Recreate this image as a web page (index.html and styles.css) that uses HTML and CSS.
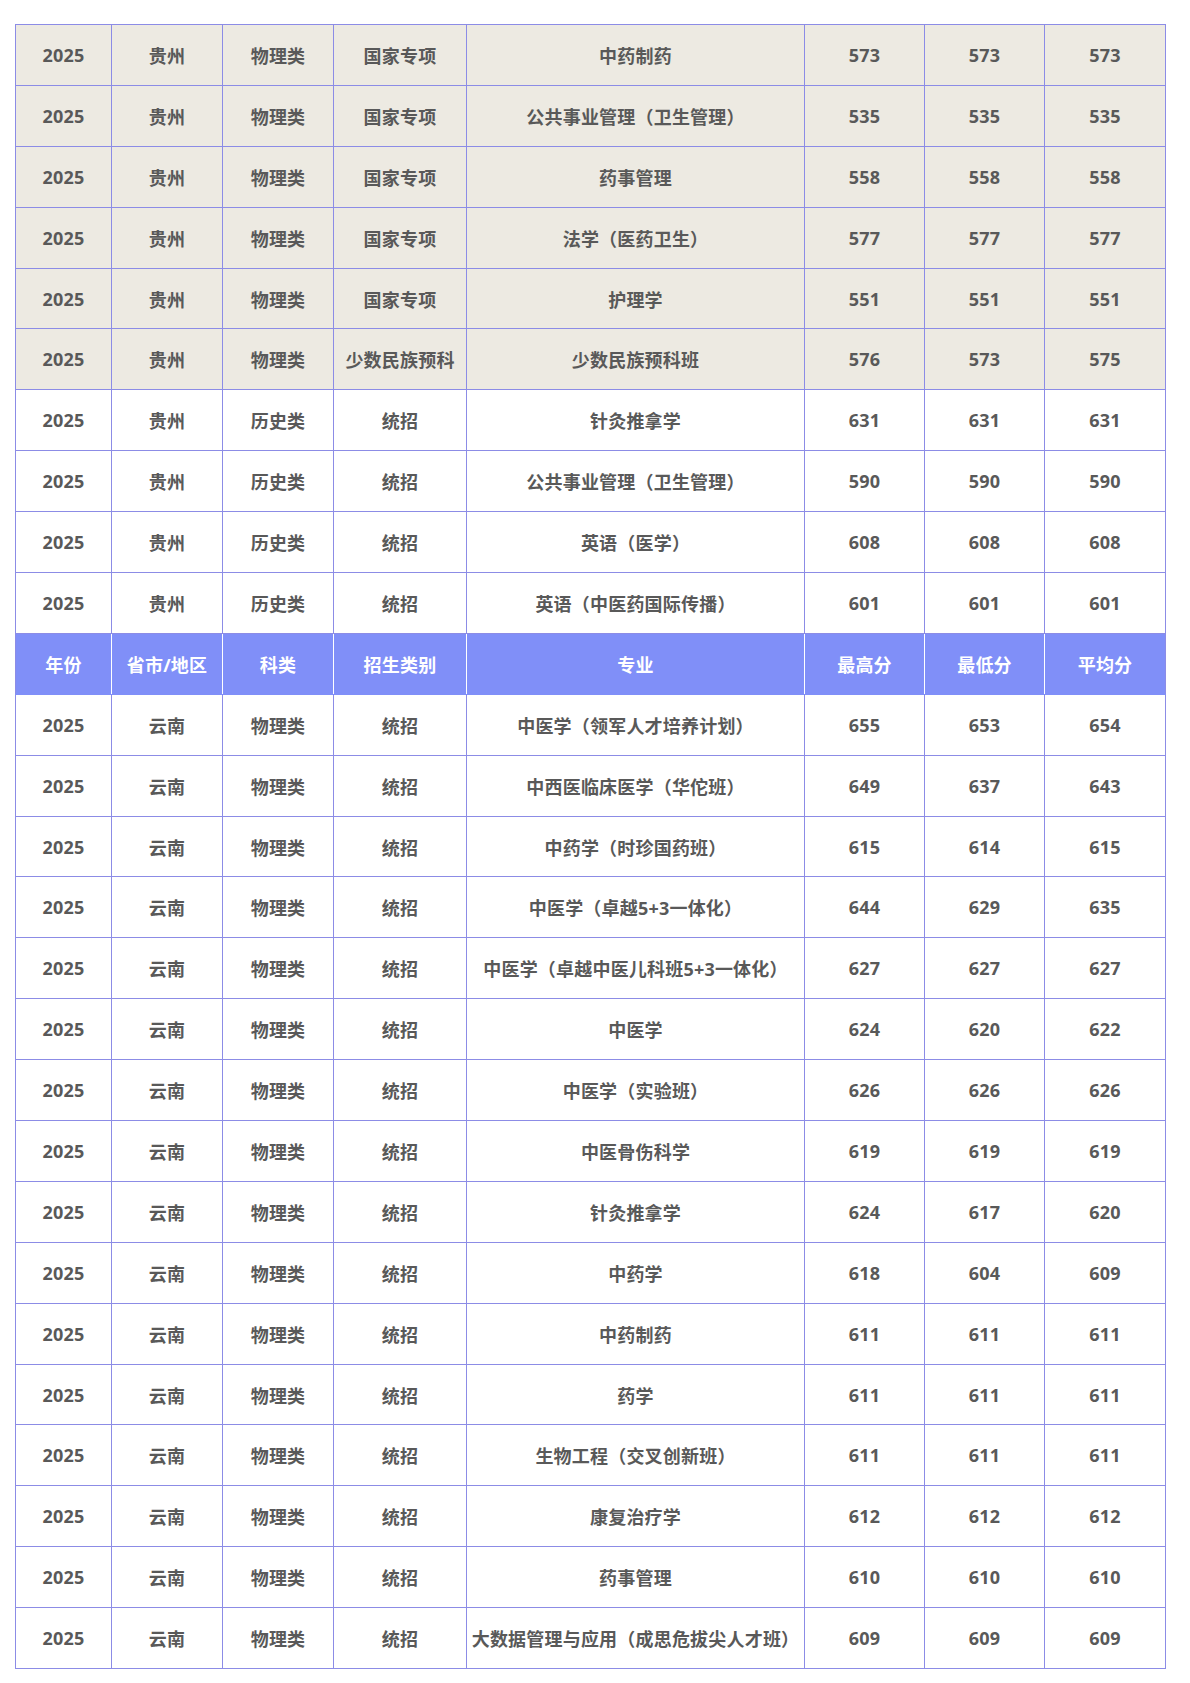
FILE: index.html
```html
<!DOCTYPE html>
<html lang="zh-CN">
<head>
<meta charset="utf-8">
<link rel="stylesheet" href="styles.css">
</head>
<body>
<div class="wrap">
<table class="score">
<colgroup>
<col class="c1"><col class="c2"><col class="c3"><col class="c4"><col class="c5"><col class="c6"><col class="c7"><col class="c8">
</colgroup>
<tbody>
<tr class="alt"><td>2025</td><td>贵州</td><td>物理类</td><td>国家专项</td><td>中药制药</td><td>573</td><td>573</td><td>573</td></tr>
<tr class="alt"><td>2025</td><td>贵州</td><td>物理类</td><td>国家专项</td><td>公共事业管理（卫生管理）</td><td>535</td><td>535</td><td>535</td></tr>
<tr class="alt"><td>2025</td><td>贵州</td><td>物理类</td><td>国家专项</td><td>药事管理</td><td>558</td><td>558</td><td>558</td></tr>
<tr class="alt"><td>2025</td><td>贵州</td><td>物理类</td><td>国家专项</td><td>法学（医药卫生）</td><td>577</td><td>577</td><td>577</td></tr>
<tr class="alt"><td>2025</td><td>贵州</td><td>物理类</td><td>国家专项</td><td>护理学</td><td>551</td><td>551</td><td>551</td></tr>
<tr class="alt"><td>2025</td><td>贵州</td><td>物理类</td><td>少数民族预科</td><td>少数民族预科班</td><td>576</td><td>573</td><td>575</td></tr>
<tr><td>2025</td><td>贵州</td><td>历史类</td><td>统招</td><td>针灸推拿学</td><td>631</td><td>631</td><td>631</td></tr>
<tr><td>2025</td><td>贵州</td><td>历史类</td><td>统招</td><td>公共事业管理（卫生管理）</td><td>590</td><td>590</td><td>590</td></tr>
<tr><td>2025</td><td>贵州</td><td>历史类</td><td>统招</td><td>英语（医学）</td><td>608</td><td>608</td><td>608</td></tr>
<tr><td>2025</td><td>贵州</td><td>历史类</td><td>统招</td><td>英语（中医药国际传播）</td><td>601</td><td>601</td><td>601</td></tr>
<tr class="head"><td>年份</td><td>省市/地区</td><td>科类</td><td>招生类别</td><td>专业</td><td>最高分</td><td>最低分</td><td>平均分</td></tr>
<tr><td>2025</td><td>云南</td><td>物理类</td><td>统招</td><td>中医学（领军人才培养计划）</td><td>655</td><td>653</td><td>654</td></tr>
<tr><td>2025</td><td>云南</td><td>物理类</td><td>统招</td><td>中西医临床医学（华佗班）</td><td>649</td><td>637</td><td>643</td></tr>
<tr><td>2025</td><td>云南</td><td>物理类</td><td>统招</td><td>中药学（时珍国药班）</td><td>615</td><td>614</td><td>615</td></tr>
<tr><td>2025</td><td>云南</td><td>物理类</td><td>统招</td><td>中医学（卓越5+3一体化）</td><td>644</td><td>629</td><td>635</td></tr>
<tr><td>2025</td><td>云南</td><td>物理类</td><td>统招</td><td>中医学（卓越中医儿科班5+3一体化）</td><td>627</td><td>627</td><td>627</td></tr>
<tr><td>2025</td><td>云南</td><td>物理类</td><td>统招</td><td>中医学</td><td>624</td><td>620</td><td>622</td></tr>
<tr><td>2025</td><td>云南</td><td>物理类</td><td>统招</td><td>中医学（实验班）</td><td>626</td><td>626</td><td>626</td></tr>
<tr><td>2025</td><td>云南</td><td>物理类</td><td>统招</td><td>中医骨伤科学</td><td>619</td><td>619</td><td>619</td></tr>
<tr><td>2025</td><td>云南</td><td>物理类</td><td>统招</td><td>针灸推拿学</td><td>624</td><td>617</td><td>620</td></tr>
<tr><td>2025</td><td>云南</td><td>物理类</td><td>统招</td><td>中药学</td><td>618</td><td>604</td><td>609</td></tr>
<tr><td>2025</td><td>云南</td><td>物理类</td><td>统招</td><td>中药制药</td><td>611</td><td>611</td><td>611</td></tr>
<tr><td>2025</td><td>云南</td><td>物理类</td><td>统招</td><td>药学</td><td>611</td><td>611</td><td>611</td></tr>
<tr><td>2025</td><td>云南</td><td>物理类</td><td>统招</td><td>生物工程（交叉创新班）</td><td>611</td><td>611</td><td>611</td></tr>
<tr><td>2025</td><td>云南</td><td>物理类</td><td>统招</td><td>康复治疗学</td><td>612</td><td>612</td><td>612</td></tr>
<tr><td>2025</td><td>云南</td><td>物理类</td><td>统招</td><td>药事管理</td><td>610</td><td>610</td><td>610</td></tr>
<tr><td>2025</td><td>云南</td><td>物理类</td><td>统招</td><td>大数据管理与应用（成思危拔尖人才班）</td><td>609</td><td>609</td><td>609</td></tr>
</tbody>
</table>
</div>
</body>
</html>
```

FILE: styles.css
```css
html, body {
  margin: 0;
  padding: 0;
  background: #ffffff;
}
.wrap {
  padding: 24px 0 0 15px;
}
.score {
  border-collapse: collapse;
  table-layout: fixed;
  width: 1150px;
  font-family: "Open Sans", "Noto Sans CJK SC", sans-serif;
  font-weight: 700;
  font-size: 18px;
  color: #595959;
}
.c1 { width: 96px; }
.c2 { width: 111px; }
.c3 { width: 111px; }
.c4 { width: 133px; }
.c5 { width: 338px; }
.c6 { width: 120px; }
.c7 { width: 120px; }
.c8 { width: 121px; }
.score td {
  border: 1px solid #8c8ce6;
  padding: 0 2px;
  text-align: center;
  vertical-align: middle;
  white-space: nowrap;
  letter-spacing: 0.2px;
}
.score tr {
  height: 60.9px;
}
.alt td {
  background: #edeae2;
}
.head td {
  background: #808ff8;
  color: #ffffff;
  border-top-color: #808ff8;
  border-bottom-color: #808ff8;
  border-left-color: #ffffff;
  border-right-color: #ffffff;
}
.head td:first-child {
  border-left-color: #8c8ce6;
}
.head td:last-child {
  border-right-color: #8c8ce6;
}
```
